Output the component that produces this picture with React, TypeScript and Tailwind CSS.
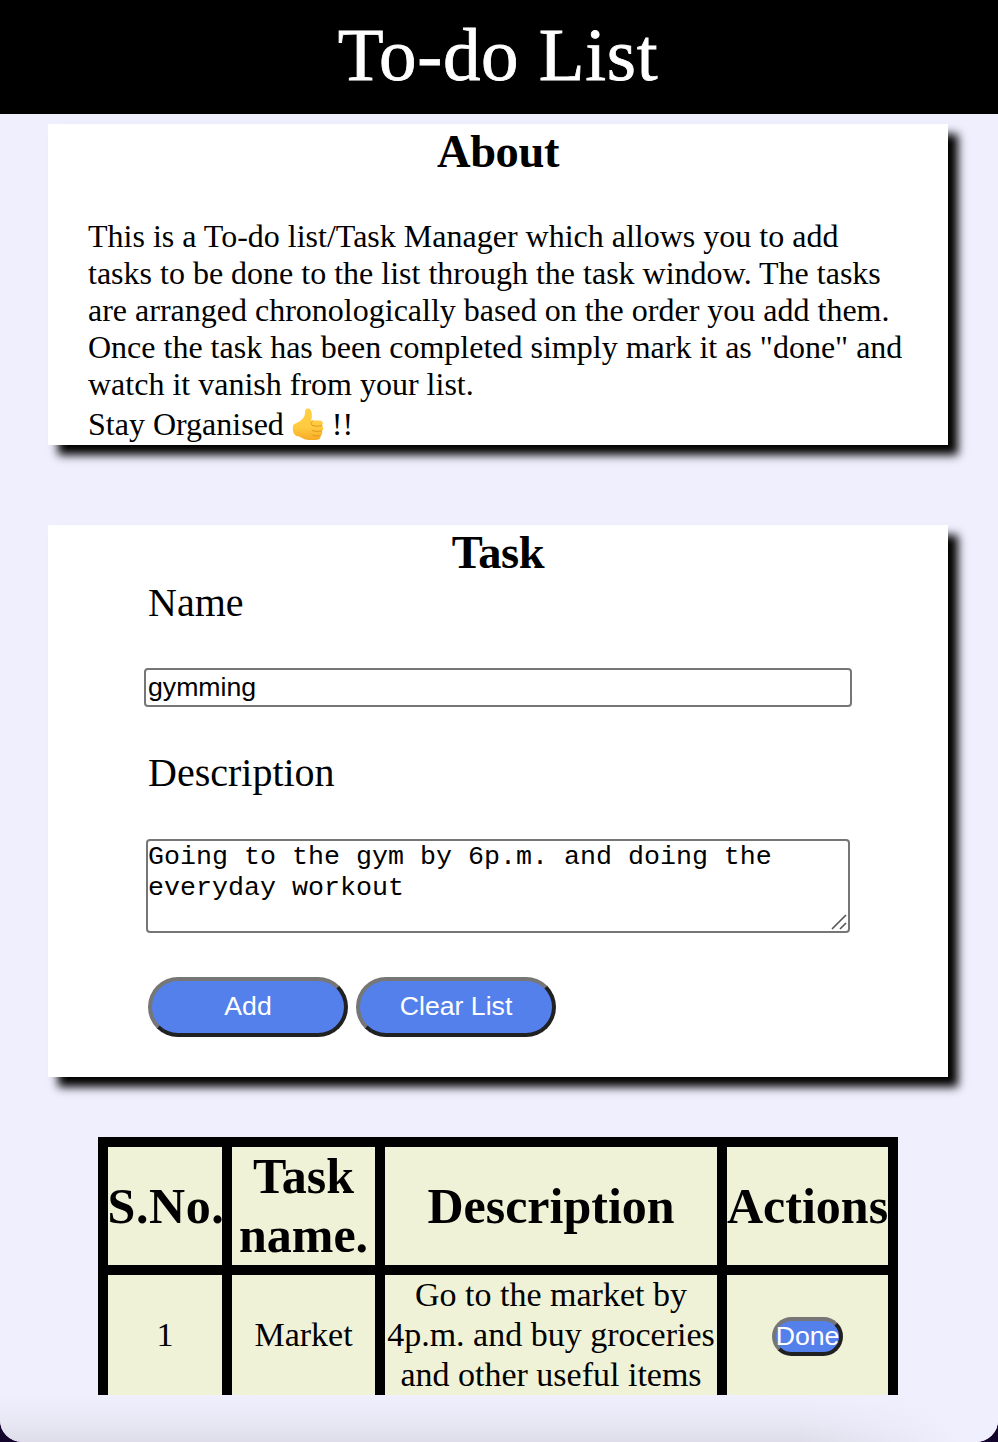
import type { ReactNode } from 'react';

function ThumbsUp() {
  return (
    <svg className="mx-[8px] inline-block h-[34px] w-[32px]" viewBox="0 0 32 34">
      <defs>
        <linearGradient id="skin" x1="0" y1="0" x2="0" y2="1">
          <stop offset="0" stopColor="#ffd045" />
          <stop offset="0.6" stopColor="#ffca40" />
          <stop offset="1" stopColor="#f6ab25" />
        </linearGradient>
      </defs>
      <path
        d="M1 19C1.5 16.8 4.5 16.3 7 14.8C10 12.8 12.8 10 13 6.5C13 4 13.2 1.6 15.5 1.4C18.4 1.3 19.6 4 19.8 7C20 9.6 19.6 12 19.2 13.6H27.5C31 13.6 31.8 17.2 29.8 18.7C32 20 31.6 23.2 29.6 24C31 25.5 30.2 28.2 28.4 28.7C29 31 27.4 32.8 24.5 32.9H17C11.5 32.9 9.5 29.8 5.5 29.2C1.5 28.5 .2 23.5 1 19Z"
        fill="url(#skin)"
      />
      <path
        d="M29.8 18.7C27 19.4 22.5 19.5 20.3 18.4M29.6 24C26.5 24.6 22.5 24.5 20.3 23.6M28.4 28.7C25.5 29.2 22.5 29 20.8 28.2M20.3 18.4C18.4 17 18.8 14.8 20.6 13.9"
        fill="none"
        stroke="#e5951f"
        strokeWidth="1"
        strokeLinecap="round"
      />
    </svg>
  );
}

function Card({ title, className, children }: { title: string; className: string; children: ReactNode }) {
  return (
    <section className={`ml-[48px] w-[900px] bg-white shadow-[10px_10px_9px_black] ${className}`}>
      <h2 className="text-center text-[46.5px] leading-[55px] font-bold tracking-[-0.4px]">{title}</h2>
      {children}
    </section>
  );
}

const buttonClass =
  'rounded-full border-4 border-t-[#767676] border-l-[#767676] border-r-[#212121] border-b-[#212121] bg-[#5480ec] font-["Liberation_Sans",sans-serif] text-[26.67px] text-white';

const cell = 'border-[10px] border-black p-0 text-center align-middle';

export default function App() {
  return (
    <div className="h-[1442px] w-[998px] overflow-hidden bg-[#14052c]">
      <div className='flex h-[1442px] flex-col overflow-hidden rounded-b-[22px] bg-[#f0effe] font-["Liberation_Serif",serif] text-black'>
        <header className="h-[114px] shrink-0 bg-black text-center text-[75px] leading-[110px] text-white">
          <h1 className="pr-[2px] tracking-[0.7px] [-webkit-text-stroke:0.8px_white]">To-do List</h1>
        </header>

        <Card title="About" className="mt-[10px] h-[321px] shrink-0">
          <div className="mt-[39px] pl-[40px] text-[32px] leading-[37px] whitespace-nowrap">
            <p>This is a To-do list/Task Manager which allows you to add</p>
            <p>tasks to be done to the list through the task window. The tasks</p>
            <p>are arranged chronologically based on the order you add them.</p>
            <p>Once the task has been completed simply mark it as "done" and</p>
            <p>watch it vanish from your list.</p>
            <p className="flex h-[42px] items-center">
              Stay Organised
              <ThumbsUp />
              !!
            </p>
          </div>
        </Card>

        <Card title="Task" className="mt-[80px] h-[552px] shrink-0">
          <form className="px-[96px]">
            <label className="block pl-[4px] text-[40px] leading-[46px]">Name</label>
            <input
              className='mt-[42px] block h-[39px] w-[708px] rounded-[4px] border-2 border-[#767676] px-[2px] pb-[2px] font-["Liberation_Sans",sans-serif] text-[26.67px] outline-none'
              defaultValue="gymming"
            />
            <label className="mt-[43px] block pl-[4px] text-[40px] leading-[46px]">Description</label>
            <div className="relative mt-[43px] ml-[2px] h-[94px] w-[704px]">
              <textarea
                className='block h-full w-full resize-none overflow-hidden rounded-[4px] border-2 border-[#767676] px-0 pt-px pb-0 font-["Liberation_Mono",monospace] text-[26.67px] leading-[31px] outline-none'
                defaultValue="Going to the gym by 6p.m. and doing the everyday workout"
              />
              <svg className="absolute right-[3px] bottom-[3px] h-[16px] w-[16px]" viewBox="0 0 16 16">
                <path d="M1 15L15 1M9 15L15 9" stroke="#555" strokeWidth="1.6" />
              </svg>
            </div>
            <div className="mt-[44px] flex gap-2 pl-[4px]">
              <button type="button" className={`${buttonClass} h-[60px] w-[200px] pb-[2px]`}>Add</button>
              <button type="button" className={`${buttonClass} h-[60px] w-[200px] pb-[2px]`}>Clear List</button>
            </div>
          </form>
        </Card>

        <div className="mt-[60px] ml-[98px] h-[258px] w-[800px] shrink-0 overflow-hidden">
          <table className="w-[800px] table-fixed border-collapse border-[10px] border-black bg-[#f0f2d8]">
            <colgroup>
              <col className="w-[124px]" />
              <col className="w-[153px]" />
              <col className="w-[342px]" />
              <col className="w-[171px]" />
            </colgroup>
            <thead>
              <tr className="h-[128px] text-[50px] leading-[59px] font-bold">
                <th className={cell}>
                  <span className="-mr-1.5 -ml-1 tracking-[0.6px]">S.No.</span>
                </th>
                <th className={cell}>Task name.</th>
                <th className={cell}>Description</th>
                <th className={cell}>Actions</th>
              </tr>
            </thead>
            <tbody>
              <tr className="h-[130px] text-[34px] leading-[40px]">
                <td className={cell}>1</td>
                <td className={cell}>Market</td>
                <td className={`${cell} whitespace-nowrap`}>
                  Go to the market by
                  <br />
                  4p.m. and buy groceries
                  <br />
                  and other useful items
                </td>
                <td className={`${cell} pt-[2px]`}>
                  <button type="button" className={`${buttonClass} mx-auto block h-[39px] w-[71px] leading-[31px]`}>
                    <span className="-mx-1">Done</span>
                  </button>
                </td>
              </tr>
            </tbody>
          </table>
        </div>
        <footer className="h-[47px] shrink-0 bg-[linear-gradient(to_right,#f0effe00_80%,#f0effe_96%),linear-gradient(#f0effe,#e8e7f4_55%,#dedde9)]" />
      </div>
    </div>
  );
}
